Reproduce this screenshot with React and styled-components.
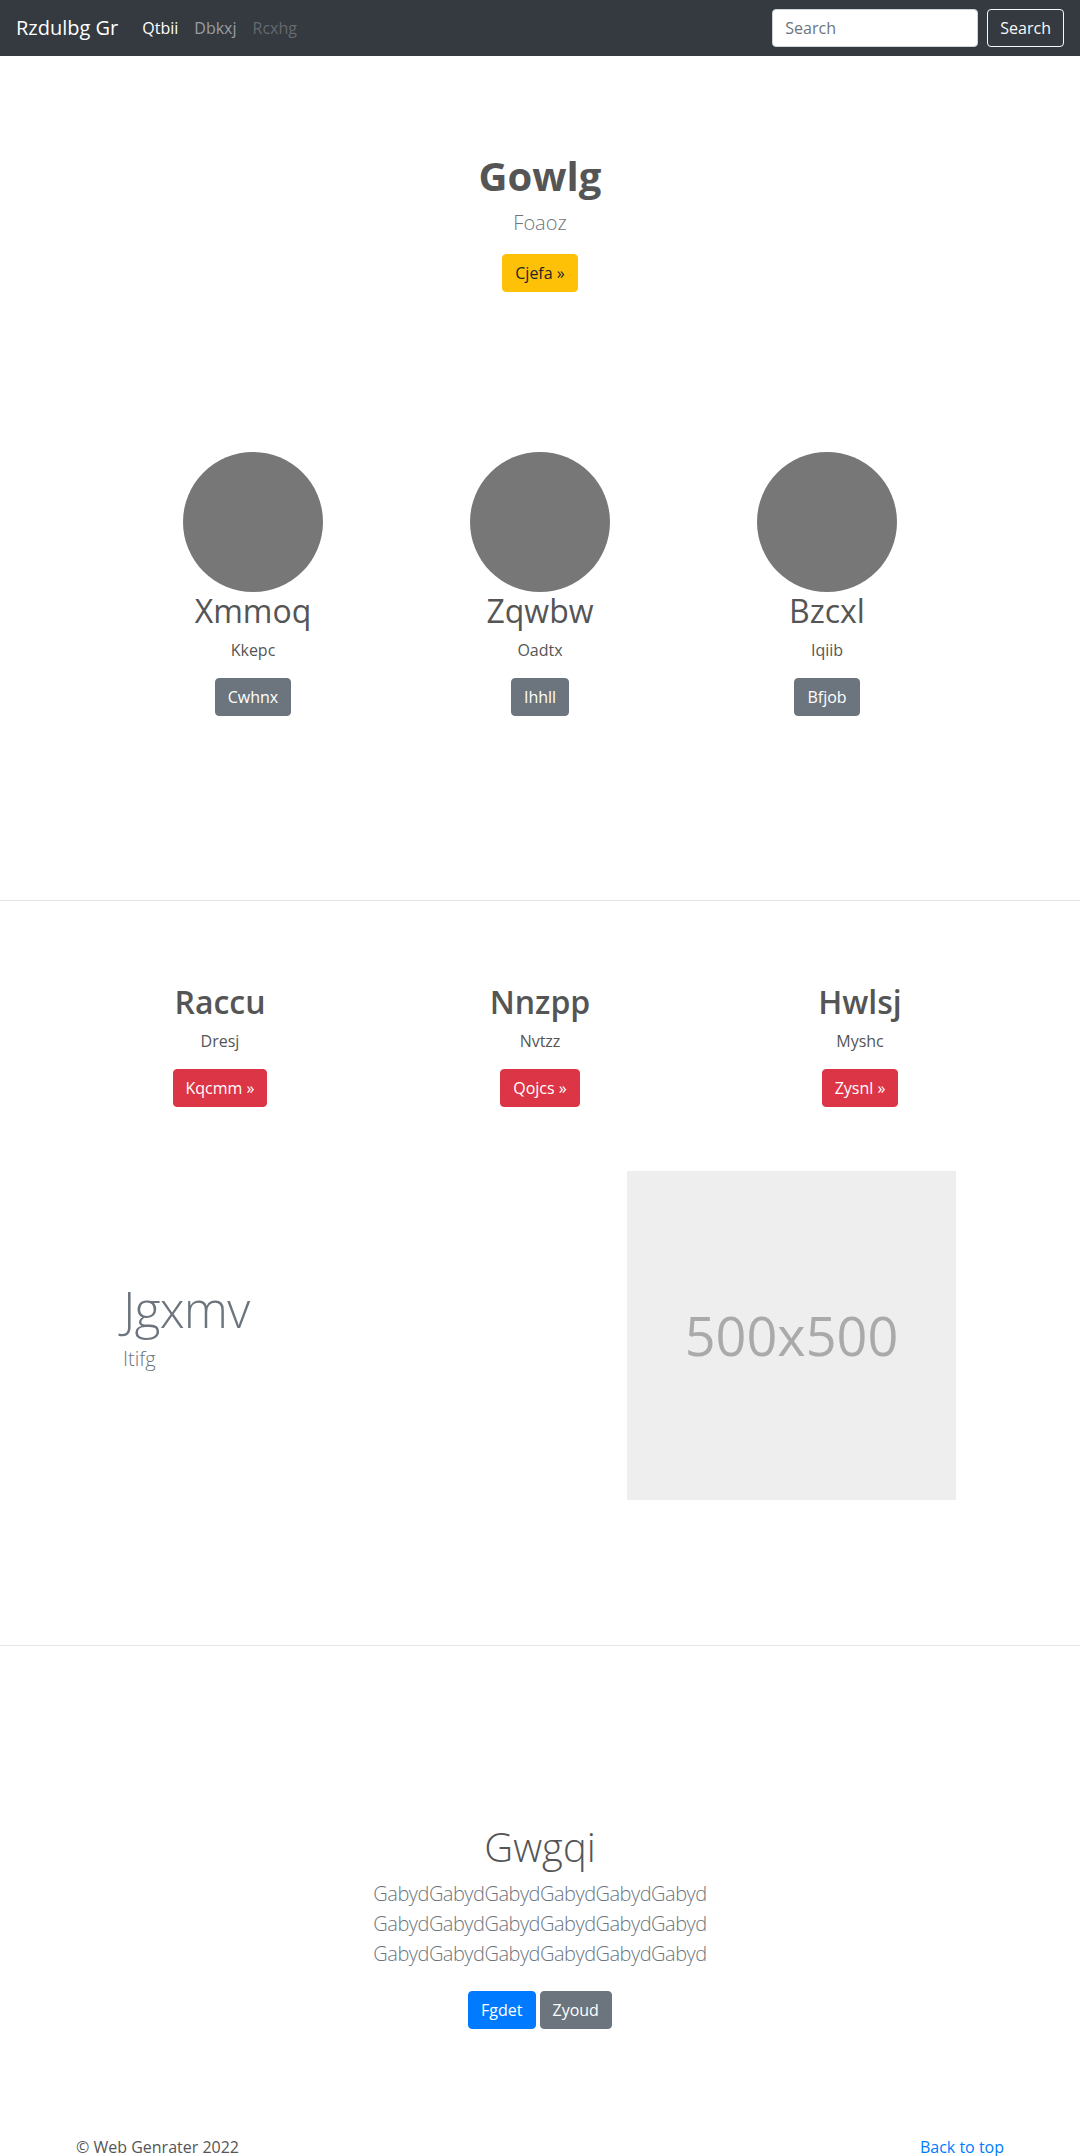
import React from "react";
import styled, { createGlobalStyle } from "styled-components";

const GlobalStyle = createGlobalStyle`
  * {
    box-sizing: border-box;
  }
  body {
    margin: 0;
    font-family: "Segoe UI", "Open Sans", "Noto Sans", sans-serif;
    font-size: 16px;
    line-height: 1.5;
    color: #555;
    background: #fff;
  }
  h1, h2, h3, p {
    margin: 0;
  }
`;

const colors = {
  warning: { bg: "#ffc107", fg: "#212529" },
  secondary: { bg: "#6c757d", fg: "#fff" },
  danger: { bg: "#dc3545", fg: "#fff" },
  primary: { bg: "#007bff", fg: "#fff" },
};

const App = () => {
  const people = [
    { name: "Xmmoq", desc: "Kkepc", btn: "Cwhnx" },
    { name: "Zqwbw", desc: "Oadtx", btn: "Ihhll" },
    { name: "Bzcxl", desc: "Iqiib", btn: "Bfjob" },
  ];
  const features = [
    { title: "Raccu", desc: "Dresj", btn: "Kqcmm »" },
    { title: "Nnzpp", desc: "Nvtzz", btn: "Qojcs »" },
    { title: "Hwlsj", desc: "Myshc", btn: "Zysnl »" },
  ];
  const line = "GabydGabydGabydGabydGabydGabyd";

  return (
    <>
      <GlobalStyle />
      <Navbar>
        <Brand>Rzdulbg Gr</Brand>
        <NavLink $state="active">Qtbii</NavLink>
        <NavLink>Dbkxj</NavLink>
        <NavLink $state="disabled">Rcxhg</NavLink>
        <SearchForm>
          <SearchInput placeholder="Search" />
          <OutlineButton>Search</OutlineButton>
        </SearchForm>
      </Navbar>

      <Hero>
        <HeroTitle>Gowlg</HeroTitle>
        <Lead>Foaoz</Lead>
        <Button $variant="warning">Cjefa »</Button>
      </Hero>

      <PeopleGrid>
        {people.map((p) => (
          <Person key={p.name}>
            <Circle />
            <PersonName>{p.name}</PersonName>
            <Desc>{p.desc}</Desc>
            <Button $variant="secondary">{p.btn}</Button>
          </Person>
        ))}
      </PeopleGrid>

      <Divider />

      <FeatureGrid>
        {features.map((f) => (
          <Person key={f.title}>
            <FeatureTitle>{f.title}</FeatureTitle>
            <Desc>{f.desc}</Desc>
            <Button $variant="danger">{f.btn}</Button>
          </Person>
        ))}
      </FeatureGrid>

      <Featurette>
        <FeaturetteText>
          <FeaturetteHeading>Jgxmv</FeaturetteHeading>
          <FeaturetteLead>Itifg</FeaturetteLead>
        </FeaturetteText>
        <Placeholder>500x500</Placeholder>
      </Featurette>

      <Divider $top={145} />

      <Jumbo>
        <JumboTitle>Gwgqi</JumboTitle>
        <JumboText>
          {line}
          <br />
          {line}
          <br />
          {line}
        </JumboText>
        <ButtonRow>
          <Button $variant="primary">Fgdet</Button>
          <Button $variant="secondary">Zyoud</Button>
        </ButtonRow>
      </Jumbo>

      <Footer>
        <span>© Web Genrater 2022</span>
        <BackLink href="#">Back to top</BackLink>
      </Footer>
    </>
  );
};

const Navbar = styled.nav`
  display: flex;
  align-items: center;
  height: 56px;
  padding: 0 16px;
  background: #343a40;
`;

const Brand = styled.a`
  font-size: 20px;
  line-height: 30px;
  color: #fff;
  margin-right: 16px;
  white-space: nowrap;
`;

const NavLink = styled.a`
  padding: 8px;
  font-size: 16px;
  color: ${(p) =>
    p.$state === "active"
      ? "#fff"
      : p.$state === "disabled"
      ? "rgba(255,255,255,0.25)"
      : "rgba(255,255,255,0.5)"};
`;

const SearchForm = styled.form`
  display: flex;
  align-items: center;
  gap: 9px;
  margin-left: auto;
`;

const SearchInput = styled.input`
  width: 206px;
  height: 38px;
  padding: 6px 12px;
  font: inherit;
  font-size: 16px;
  color: #495057;
  background: #fff;
  border: 1px solid #ced4da;
  border-radius: 4px;
  &::placeholder {
    color: #6c757d;
  }
`;

const OutlineButton = styled.button`
  height: 38px;
  padding: 6px 12px;
  font: inherit;
  font-size: 16px;
  color: #f8f9fa;
  background: transparent;
  border: 1px solid #f8f9fa;
  border-radius: 4px;
`;

const Button = styled.button`
  display: inline-block;
  height: 38px;
  padding: 6px 12px;
  font: inherit;
  font-size: 16px;
  line-height: 24px;
  border: 1px solid ${(p) => colors[p.$variant].bg};
  border-radius: 4px;
  background: ${(p) => colors[p.$variant].bg};
  color: ${(p) => colors[p.$variant].fg};
`;

const Hero = styled.section`
  display: flex;
  flex-direction: column;
  align-items: center;
  padding-top: 96px;
`;

const HeroTitle = styled.h1`
  font-size: 40px;
  font-weight: 700;
  line-height: 1.2;
  margin-bottom: 8px;
  color: #555;
`;

const Lead = styled.p`
  font-size: 20px;
  font-weight: 300;
  line-height: 30px;
  color: #6c757d;
  margin-bottom: 16px;
`;

const PeopleGrid = styled.section`
  display: grid;
  grid-template-columns: repeat(3, 1fr);
  width: 861px;
  margin: 160px auto 0;
`;

const Person = styled.div`
  display: flex;
  flex-direction: column;
  align-items: center;
`;

const Circle = styled.div`
  width: 140px;
  height: 140px;
  border-radius: 50%;
  background: #777;
`;

const PersonName = styled.h2`
  font-size: 32px;
  font-weight: 400;
  line-height: 1.2;
  margin-bottom: 8px;
  color: #555;
`;

const Desc = styled.p`
  font-size: 16px;
  line-height: 24px;
  margin-bottom: 16px;
  color: #555;
`;

const Divider = styled.hr`
  margin: ${(p) => p.$top || 184}px 0 0;
  border: 0;
  border-top: 1px solid #e5e5e5;
`;

const FeatureGrid = styled.section`
  display: grid;
  grid-template-columns: repeat(3, 1fr);
  width: 960px;
  margin: 82px auto 0;
`;

const FeatureTitle = styled.h2`
  font-size: 32px;
  font-weight: 600;
  line-height: 1.2;
  margin-bottom: 7px;
  color: #555;
`;

const Featurette = styled.section`
  display: grid;
  grid-template-columns: 1fr 329px;
  align-items: center;
  width: 960px;
  margin: 64px auto 0;
  padding: 0 64px 0 63px;
`;

const FeaturetteText = styled.div`
  padding-bottom: 12px;
`;

const FeaturetteHeading = styled.h2`
  font-size: 50px;
  font-weight: 300;
  line-height: 1;
  letter-spacing: -0.8px;
  margin-bottom: 10px;
  color: #6c757d;
`;

const FeaturetteLead = styled.p`
  font-size: 20px;
  font-weight: 300;
  line-height: 30px;
  color: #6c757d;
`;

const Placeholder = styled.div`
  display: flex;
  align-items: center;
  justify-content: center;
  width: 329px;
  height: 329px;
  background: #eee;
  color: #aaa;
  font-family: "Open Sans", sans-serif;
  font-size: 54px;
`;

const Jumbo = styled.section`
  display: flex;
  flex-direction: column;
  align-items: center;
  text-align: center;
  margin-top: 177px;
`;

const JumboTitle = styled.h1`
  font-size: 40px;
  font-weight: 300;
  line-height: 1.2;
  margin-bottom: 8px;
  color: #555;
`;

const JumboText = styled.p`
  font-size: 20px;
  font-weight: 300;
  line-height: 30px;
  letter-spacing: -0.5px;
  color: #6c757d;
  margin-bottom: 22px;
`;

const ButtonRow = styled.div`
  display: flex;
  gap: 4px;
`;

const Footer = styled.footer`
  display: flex;
  justify-content: space-between;
  align-items: center;
  width: 960px;
  margin: 106px auto 0;
  padding: 0 16px;
  font-size: 16px;
  color: #555;
`;

const BackLink = styled.a`
  color: #007bff;
  text-decoration: none;
`;

export default App;
